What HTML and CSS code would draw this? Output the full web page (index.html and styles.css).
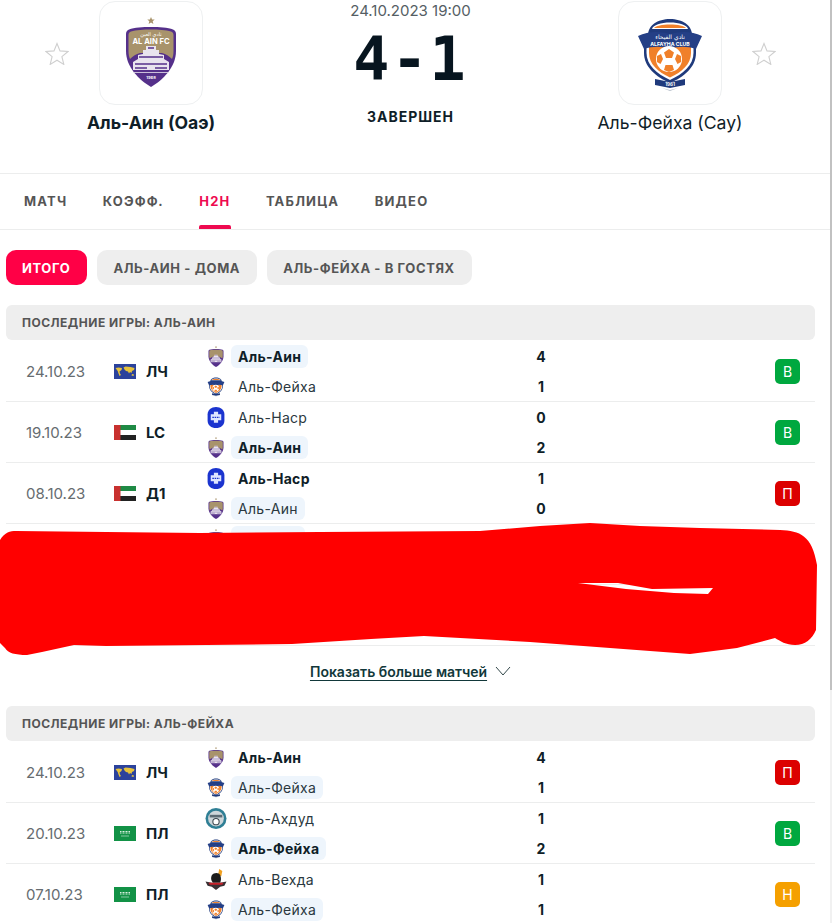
FILE: index.html
```html
<!DOCTYPE html>
<html lang="ru">
<head>
<meta charset="UTF-8">
<meta name="viewport" content="width=device-width, initial-scale=1.0">
<title>Аль-Аин - Аль-Фейха H2H</title>
<link rel="stylesheet" href="styles.css">
</head>
<body>

<!-- shared crests and flags -->
<svg class="defs" aria-hidden="true">
    <symbol id="star" viewBox="0 0 24 23">
        <path d="M12 1.500l3 7.400 8 .6-6.100 5.100 1.900 7.800L12 18.200l-6.800 4.200 1.900-7.800L1 9.500l8-.6z" fill="none" stroke="#cfcfcf" stroke-width="1.100"/>
    </symbol>
    <symbol id="crest-alain" viewBox="0 0 50 70">
        <path d="M25 0l1.100 2.400 2.600.2-2 1.700.7 2.600L25 5.500l-2.400 1.400.7-2.600-2-1.700 2.600-.2z" fill="#a8936b"/>
        <path d="M25 10c-8 0-17 .5-22 2.500C1 13.400 0 15 0 17v17c0 16 13 29 25 36 12-7 25-20 25-36V17c0-2-1-3.600-3-4.500C42 10.500 33 10 25 10z" fill="#55308a"/>
        <path d="M25 12.500c-7 0-15 .5-20 2-1.500.6-2.500 1.500-2.500 3.500v16c0 3 .5 6 1.500 8 3-3 6-5 10-6h22c4 1 7 3 10 6 1-2 1.500-5 1.500-8V18c0-2-1-2.900-2.500-3.500-5-1.500-13-2-20-2z" fill="#a8936b"/>
        <path d="M20 29h10v4h3v4l5 1v4l5 3v8H7v-8l5-3v-4l5-1v-4h3z" fill="#e9e4ee"/>
        <path d="M22 31h6M13 40h24M9 47h32M9 51h12M29 51h12" stroke="#55308a" stroke-width="1.300"/>
        <path d="M7 55.500h36" stroke="#e9e4ee" stroke-width=".8"/>
    </symbol>
    <symbol id="crest-fayha" viewBox="0 0 72 80">
        <path d="M14 24C13 12 24 6 36 6s23 6 22 18z" fill="#1f3a7c"/>
        <path d="M18 16c1-4 9-6.500 18-6.500s17 2.500 18 6.500z" fill="#fff"/>
        <path d="M20 15c2-2 8-3.500 16-3.500s14 1.500 16 3.500z" fill="#f0802a"/>
        <path d="M10 30v10c0 14 12 24 26 30 14-6 26-16 26-30V30z" fill="#1f3a7c"/>
        <path d="M12.500 32v8c0 12 10.500 21 23.500 27 13-6 23.500-15 23.500-27v-8z" fill="#fff"/>
        <path d="M15 33v7c0 11 9 19 21 24.500C48 59 57 51 57 40v-7z" fill="#f0802a"/>
        <path d="M4 23c10-5 22-5 32-2 10-3 22-3 32 2l-6 13c-9-3-18-3-26 0-8-3-17-3-26 0z" fill="#243f86"/>
        <circle cx="35" cy="46" r="13" fill="#fff"/>
        <path d="M30 39.500l5-3.500 5 3.500-2 5.500h-6zM23 43l4-2 2 5-2.500 5-3.500-2zM47 43l-4-2-2 5 2.500 5 3.500-2zM30 57l1.500-5h7l1.500 5-5 2z" fill="#f0802a"/>
        <path d="M21 66l15 3 15-3v6l-15 3-15-3z" fill="#1f3a7c"/>
        <path d="M28 75l8 2 8-2-8 3z" fill="#b9c2cc"/>
    </symbol>
    <symbol id="crest-nasr" viewBox="0 0 16 20">
        <path d="M8 0c4.500 0 8 3 8 7v6c0 4-3.500 7-8 7s-8-3-8-7V7c0-4 3.500-7 8-7z" fill="#1b34cf"/>
        <path d="M6 4.500h4V7h3v5.500h-3V15H6v-2.500H3V7h3z" fill="#dfe6ff"/>
        <path d="M4.500 9.800h7" stroke="#1b34cf" stroke-width="1.200" stroke-dasharray="1.500 .7"/>
    </symbol>
    <symbol id="crest-ahdud" viewBox="0 0 20 20">
        <circle cx="10" cy="10" r="10" fill="#2f7f95"/>
        <circle cx="10" cy="10" r="7.500" fill="#cdd6da"/>
        <path d="M4 6.500h12v2.500H4z" fill="#5b6b74"/>
        <circle cx="10" cy="13" r="3" fill="#fff" stroke="#3a464d"/>
    </symbol>
    <symbol id="crest-vehda" viewBox="0 0 20 20">
        <path d="M13 0l3 2-1 5-3-1z" fill="#f0a020"/>
        <path d="M6 6c2-3 7-3 8 0 1 2 1 5 0 7H7C5 11 5 8 6 6z" fill="#1c1c1c"/>
        <path d="M0 12l6 1h8l6-1-2 4-4 1-4 3-4-3-4-1z" fill="#3a3034"/>
        <path d="M3 13h14l-1 2H4z" fill="#c8202a"/>
    </symbol>
    <symbol id="flag-world" viewBox="0 0 22 15">
        <rect width="22" height="15" fill="#2b429c"/>
        <path d="M1.500 4l3-.6 3.500.6-.5 2-2 1.500.5 2 1 1.500-1.500 1-1-2.500-.8-2.500zM9.500 3.500l2-1 5 .5 4 1-.5 2-2 1-.5 2-1.500-1-1 1.500-1-2-2-.5-1.500-1.500z" fill="#e6c23c"/>
        <path d="M18 10l2 .5-.5 1.500-2-.5z" fill="#e6c23c"/>
    </symbol>
    <symbol id="flag-uae" viewBox="0 0 22 15">
        <rect width="22" height="5" fill="#1f8a45"/>
        <rect y="5" width="22" height="5" fill="#fff"/>
        <rect y="10" width="22" height="5" fill="#222"/>
        <rect width="6.500" height="15" fill="#c8312f"/>
    </symbol>
    <symbol id="flag-ksa" viewBox="0 0 22 15">
        <rect width="22" height="15" fill="#129246"/>
        <path d="M6 5.500h10M6 7h10" stroke="#d9efe0" stroke-width="1.200" stroke-dasharray="1 .5"/>
        <path d="M7 10h8" stroke="#d9efe0" stroke-width=".6"/>
    </symbol>
</svg>

<header class="match-head">
    <div class="team">
        <div class="team-top">
            <svg class="fav fav-left"><use href="#star"/></svg>
            <div class="logo-box">
                <svg class="logo-alain" viewBox="0 0 50 70">
                    <use href="#crest-alain"/>
                    <text class="logo-txt logo-arabic" x="25" y="18.500" font-size="5">نادي العين</text>
                    <text class="logo-txt" x="25" y="27" font-size="7.600" font-weight="700">AL AIN FC</text>
                    <text class="logo-txt" x="25" y="62" font-size="4" font-weight="700">1968</text>
                </svg>
            </div>
        </div>
        <div class="team-name bold">Аль-Аин (Оаэ)</div>
    </div>
    <div class="result">
        <div class="result-date">24.10.2023 19:00</div>
        <div class="result-score">4-1</div>
        <div class="result-status">ЗАВЕРШЕН</div>
    </div>
    <div class="team">
        <div class="team-top">
            <div class="logo-box">
                <svg class="logo-fayha" viewBox="0 0 72 80">
                    <use href="#crest-fayha"/>
                    <text class="logo-txt logo-arabic" x="36" y="26" font-size="6">نادي الفيحاء</text>
                    <text class="logo-txt" x="36" y="32.500" font-size="5.200" font-weight="700">ALFAYHA CLUB</text>
                    <text class="logo-txt" x="36" y="73" font-size="4.500" font-weight="700">1961</text>
                </svg>
            </div>
            <svg class="fav fav-right"><use href="#star"/></svg>
        </div>
        <div class="team-name">Аль-Фейха (Сау)</div>
    </div>
</header>

<nav class="tabs">
    <a class="tab">МАТЧ</a>
    <a class="tab">КОЭФФ.</a>
    <a class="tab active">H2H</a>
    <a class="tab">ТАБЛИЦА</a>
    <a class="tab">ВИДЕО</a>
</nav>

<main class="content">
    <div class="filters">
        <button type="button" class="filter active">ИТОГО</button>
        <button type="button" class="filter">АЛЬ-АИН - ДОМА</button>
        <button type="button" class="filter">АЛЬ-ФЕЙХА - В ГОСТЯХ</button>
    </div>

    <section class="games">
        <h2 class="games-title">ПОСЛЕДНИЕ ИГРЫ: АЛЬ-АИН</h2>

        <div class="row">
            <span class="date">24.10.23</span>
            <svg class="flag"><use href="#flag-world"/></svg>
            <span class="league">ЛЧ</span>
            <div class="teams">
                <div class="line">
                    <svg class="crest"><use href="#crest-alain"/></svg>
                    <div class="name-cell"><span class="name mark bold">Аль-Аин</span></div>
                    <span class="score">4</span>
                </div>
                <div class="line">
                    <svg class="crest"><use href="#crest-fayha"/></svg>
                    <div class="name-cell"><span class="name">Аль-Фейха</span></div>
                    <span class="score">1</span>
                </div>
            </div>
            <span class="badge win">В</span>
        </div>

        <div class="row">
            <span class="date">19.10.23</span>
            <svg class="flag"><use href="#flag-uae"/></svg>
            <span class="league">LC</span>
            <div class="teams">
                <div class="line">
                    <svg class="crest"><use href="#crest-nasr"/></svg>
                    <div class="name-cell"><span class="name">Аль-Наср</span></div>
                    <span class="score">0</span>
                </div>
                <div class="line">
                    <svg class="crest"><use href="#crest-alain"/></svg>
                    <div class="name-cell"><span class="name mark bold">Аль-Аин</span></div>
                    <span class="score">2</span>
                </div>
            </div>
            <span class="badge win">В</span>
        </div>

        <div class="row">
            <span class="date">08.10.23</span>
            <svg class="flag"><use href="#flag-uae"/></svg>
            <span class="league">Д1</span>
            <div class="teams">
                <div class="line">
                    <svg class="crest"><use href="#crest-nasr"/></svg>
                    <div class="name-cell"><span class="name bold">Аль-Наср</span></div>
                    <span class="score">1</span>
                </div>
                <div class="line">
                    <svg class="crest"><use href="#crest-alain"/></svg>
                    <div class="name-cell"><span class="name mark">Аль-Аин</span></div>
                    <span class="score">0</span>
                </div>
            </div>
            <span class="badge loss">П</span>
        </div>

        <!-- these two rows are painted over in the screenshot -->
        <div class="row row-hidden">
            <svg class="scribble" viewBox="0 0 817 132" aria-hidden="true">
                <path fill-rule="evenodd" fill="#ff0000" d="M0 17C5 9 10 8 16 8L106 9 200 10 320 9 480 8 540 3 590 0 640 3 700 5 780 7C800 8 812 12 817 42L816 107C812 116 805 122 795 122 786 122 780 118 775 115L737 125 690 131 610 125 530 119 424 113 371 116 292 121 106 123 74 122 42 129 27 132C15 132 8 130 5 125L0 120zM578 60L618 60 652 66 713 65 708 71 674 70 626 66z"/>
            </svg>
            <div class="teams hidden-teams">
                <div class="line">
                    <svg class="crest"><use href="#crest-alain"/></svg>
                    <div class="name-cell"><span class="name mark name-blank"></span></div>
                </div>
            </div>
        </div>
        <div class="row row-hidden"></div>

        <div class="more">
            <a class="more-link">Показать больше матчей</a>
            <svg class="more-arrow" viewBox="0 0 16 10"><path d="M1 1l7 8 7-8" fill="none" stroke="#33484a"/></svg>
        </div>
    </section>

    <section class="games">
        <h2 class="games-title">ПОСЛЕДНИЕ ИГРЫ: АЛЬ-ФЕЙХА</h2>

        <div class="row">
            <span class="date">24.10.23</span>
            <svg class="flag"><use href="#flag-world"/></svg>
            <span class="league">ЛЧ</span>
            <div class="teams">
                <div class="line">
                    <svg class="crest"><use href="#crest-alain"/></svg>
                    <div class="name-cell"><span class="name bold">Аль-Аин</span></div>
                    <span class="score">4</span>
                </div>
                <div class="line">
                    <svg class="crest"><use href="#crest-fayha"/></svg>
                    <div class="name-cell"><span class="name mark">Аль-Фейха</span></div>
                    <span class="score">1</span>
                </div>
            </div>
            <span class="badge loss">П</span>
        </div>

        <div class="row">
            <span class="date">20.10.23</span>
            <svg class="flag"><use href="#flag-ksa"/></svg>
            <span class="league">ПЛ</span>
            <div class="teams">
                <div class="line">
                    <svg class="crest"><use href="#crest-ahdud"/></svg>
                    <div class="name-cell"><span class="name">Аль-Ахдуд</span></div>
                    <span class="score">1</span>
                </div>
                <div class="line">
                    <svg class="crest"><use href="#crest-fayha"/></svg>
                    <div class="name-cell"><span class="name mark bold">Аль-Фейха</span></div>
                    <span class="score">2</span>
                </div>
            </div>
            <span class="badge win">В</span>
        </div>

        <div class="row">
            <span class="date">07.10.23</span>
            <svg class="flag"><use href="#flag-ksa"/></svg>
            <span class="league">ПЛ</span>
            <div class="teams">
                <div class="line">
                    <svg class="crest"><use href="#crest-vehda"/></svg>
                    <div class="name-cell"><span class="name">Аль-Вехда</span></div>
                    <span class="score">1</span>
                </div>
                <div class="line">
                    <svg class="crest"><use href="#crest-fayha"/></svg>
                    <div class="name-cell"><span class="name mark">Аль-Фейха</span></div>
                    <span class="score">1</span>
                </div>
            </div>
            <span class="badge draw">Н</span>
        </div>
    </section>
</main>

<div class="scrollbar"><div class="scrollbar-thumb"></div></div>

</body>
</html>
```

FILE: styles.css
```css
html, body {
    height: 923px;
    overflow: hidden;
}
body {
    font-family: Inter, "Liberation Sans", sans-serif;
    background-color: #fff;
    color: #0f1e28;
    margin: 0;
    padding: 0;
    position: relative;
}
.defs {
    display: none;
}
.bold {
    font-weight: 700;
}

/* match header */
.match-head {
    display: grid;
    grid-template-columns: 302px 1fr 302px;
    width: 821px;
    height: 173px;
    padding-top: 1px;
    box-sizing: border-box;
}
.team-top {
    display: grid;
    grid-template-columns: 1fr 104px 1fr;
    align-items: center;
}
.logo-box {
    grid-column: 2;
    width: 104px;
    height: 104px;
    box-sizing: border-box;
    border: 1px solid #eef0f1;
    border-radius: 16px;
    display: flex;
    align-items: center;
    justify-content: center;
}
.logo-alain {
    width: 50px;
    height: 70px;
    margin-top: -2px;
}
.logo-fayha {
    width: 72px;
    height: 80px;
}
.logo-txt {
    fill: #fff;
    text-anchor: middle;
    font-family: Inter, sans-serif;
}
.logo-arabic {
    font-family: "DejaVu Sans", sans-serif;
}
.fav {
    width: 24px;
    height: 23px;
}
.fav-left {
    grid-column: 1;
    grid-row: 1;
    justify-self: end;
    margin-right: 30px;
}
.fav-right {
    grid-column: 3;
    grid-row: 1;
    justify-self: start;
    margin-left: 30px;
}
.team-name {
    margin-top: 8px;
    text-align: center;
    font-size: 17.6px;
    line-height: 20px;
    color: #0f1e28;
}
.result {
    text-align: center;
}
.result-date {
    font-size: 15px;
    line-height: 19px;
    color: #555e64;
}
.result-score {
    font-family: "DejaVu Sans Mono", monospace;
    font-weight: 700;
    font-size: 60px;
    line-height: 78px;
    letter-spacing: 2px;
    color: #07151f;
}
.result-status {
    margin-top: 9px;
    font-size: 14px;
    line-height: 20px;
    font-weight: 700;
    letter-spacing: 1px;
}

/* tabs */
.tabs {
    display: flex;
    gap: 35.4px;
    padding: 0 24px;
    height: 57px;
    box-sizing: border-box;
    border-top: 1px solid #eceded;
    border-bottom: 1px solid #eceded;
}
.tab {
    position: relative;
    font-size: 13px;
    font-weight: 700;
    letter-spacing: 1.2px;
    line-height: 55px;
    color: #555;
}
.tab.active {
    color: #ee0a50;
}
.tab.active::after {
    content: "";
    position: absolute;
    left: 0;
    right: 0;
    bottom: 0;
    height: 4px;
    border-radius: 2px 2px 0 0;
    background-color: #ee0a50;
}

/* filter pills */
.content {
    padding: 20px 17px 0 6px;
}
.filters {
    display: flex;
    gap: 10px;
    margin-bottom: 20px;
}
.filter {
    height: 35px;
    padding: 0 17px 0 16px;
    border: none;
    border-radius: 10px;
    background-color: #eee;
    color: #555;
    font-family: inherit;
    font-size: 13px;
    font-weight: 700;
    letter-spacing: 0.6px;
}
.filter.active {
    background-color: #ff0046;
    color: #fff;
}

/* game list */
.games-title {
    margin: 0 0 1px;
    height: 35px;
    padding-left: 16px;
    border-radius: 6px;
    background-color: #eee;
    color: #555;
    font-size: 12px;
    line-height: 35px;
    font-weight: 700;
    letter-spacing: 0.5px;
}
.row {
    display: flex;
    align-items: center;
    height: 61px;
    box-sizing: border-box;
    padding-left: 20px;
    border-bottom: 1px solid #eceded;
    position: relative;
}
.date {
    width: 88px;
    font-size: 15px;
    color: #666c70;
}
.flag {
    width: 22px;
    height: 15px;
    margin-right: 10px;
}
.league {
    width: 59px;
    font-size: 15px;
    font-weight: 700;
}
.teams {
    width: 346px;
}
.hidden-teams {
    margin-left: 179px;
    align-self: flex-start;
}
.line {
    display: flex;
    align-items: center;
    height: 30px;
}
.crest {
    width: 22px;
    height: 21px;
    flex: none;
}
.name-cell {
    width: 304px;
    padding-left: 4px;
    box-sizing: border-box;
}
.name {
    display: inline-block;
    padding: 0 7px;
    font-size: 14px;
    line-height: 23px;
    letter-spacing: 0.3px;
    color: #2a3840;
}
.name.bold {
    color: #0f1e28;
}
.name.mark {
    border-radius: 6px;
    background-color: #eef5fc;
}
.name-blank {
    width: 60px;
    height: 23px;
}
.score {
    width: 20px;
    text-align: center;
    font-size: 14px;
    font-weight: 700;
}
.badge {
    margin-left: auto;
    margin-right: 15px;
    width: 25px;
    height: 25px;
    border-radius: 5px;
    color: #fff;
    font-size: 14px;
    line-height: 25px;
    text-align: center;
}
.win {
    background-color: #00a83f;
}
.loss {
    background-color: #dc0000;
}
.draw {
    background-color: #f5a000;
}
.scribble {
    position: absolute;
    left: -6px;
    top: -1px;
    width: 817px;
    height: 132px;
    z-index: 2;
}

/* show more */
.more {
    display: flex;
    align-items: center;
    justify-content: center;
    gap: 8px;
    height: 60px;
    padding-bottom: 10px;
    box-sizing: border-box;
}
.more-link {
    font-size: 14px;
    font-weight: 600;
    color: #12383a;
    text-decoration: underline;
    text-underline-offset: 3px;
}
.more-arrow {
    width: 16px;
    height: 10px;
}

.scrollbar {
    position: absolute;
    top: 0;
    right: 0;
    bottom: 0;
    width: 2px;
    background-color: #f1f1f1;
}
.scrollbar-thumb {
    height: 690px;
    background-color: #c1c1c1;
}
```
